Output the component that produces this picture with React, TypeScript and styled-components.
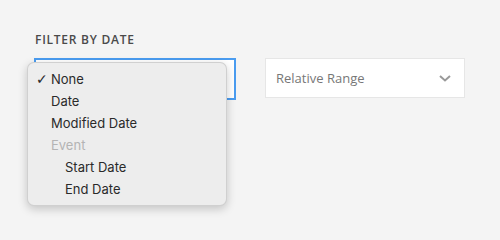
import styled, { createGlobalStyle } from "styled-components";

const GlobalStyle = createGlobalStyle`
  html, body {
    margin: 0;
    background: #f4f4f4;
  }
  body {
    font-family: "Open Sans", sans-serif;
  }
`;

const Page = styled.div`
  width: 500px;
  height: 240px;
  padding: 33px 0 0 35px;
  box-sizing: border-box;
`;

const Label = styled.div`
  font-family: "Open Sans", sans-serif;
  font-size: 12px;
  font-weight: 600;
  letter-spacing: 0.75px;
  color: #4a4a4a;
  line-height: 14px;
  margin-bottom: 11px;
`;

const Row = styled.div`
  display: flex;
  gap: 30px;
  align-items: flex-start;
`;

const Field = styled.div`
  position: relative;
`;

const Select = styled.div<{ $active?: boolean }>`
  width: 200px;
  height: 40px;
  box-sizing: border-box;
  background: #fff;
  border: 1px solid ${(p) => (p.$active ? "#4a9cf0" : "#e6e6e6")};
  box-shadow: ${(p) => (p.$active ? "0 0 0 1px #4a9cf0" : "none")};
  display: flex;
  align-items: center;
  justify-content: space-between;
  padding: 0 12px 0 10px;
  margin-top: ${(p) => (p.$active ? "1px" : "0")};
  font-size: 13px;
  color: #777;
`;

const Menu = styled.div`
  position: absolute;
  left: -8px;
  top: 4px;
  width: 200px;
  box-sizing: border-box;
  padding: 5px 0;
  background: #ededed;
  border: 1px solid rgba(0, 0, 0, 0.12);
  border-radius: 7px;
  box-shadow: 0 3px 10px rgba(0, 0, 0, 0.2);
  font-family: Inter, "Liberation Sans", sans-serif;
  font-size: 13px;
`;

const Item = styled.div<{ $indent?: boolean; $disabled?: boolean }>`
  display: flex;
  align-items: center;
  height: 22px;
  padding-left: ${(p) => (p.$indent ? "37px" : "23px")};
  color: ${(p) => (p.$disabled ? "#b4b4b4" : "#2a2a2a")};
  position: relative;
`;

const Check = styled.span`
  position: absolute;
  left: 8px;
  font-family: "DejaVu Sans", sans-serif;
  font-size: 14px;
  font-weight: bold;
  color: #2a2a2a;
`;

const Chevron = () => (
  <svg width="14" height="9" viewBox="0 0 14 9">
    <path d="M2 2 L7 6.5 L12 2" fill="none" stroke="#999" strokeWidth="2" />
  </svg>
);

export default function App() {
  return (
    <>
      <GlobalStyle />
      <Page>
        <Label>FILTER BY DATE</Label>
        <Row>
          <Field>
            <Select $active />
            <Menu>
              <Item>
                <Check>✓</Check>None
              </Item>
              <Item>Date</Item>
              <Item>Modified Date</Item>
              <Item $disabled>Event</Item>
              <Item $indent>Start Date</Item>
              <Item $indent>End Date</Item>
            </Menu>
          </Field>
          <Field>
            <Select>
              <span>Relative Range</span>
              <Chevron />
            </Select>
          </Field>
        </Row>
      </Page>
    </>
  );
}
